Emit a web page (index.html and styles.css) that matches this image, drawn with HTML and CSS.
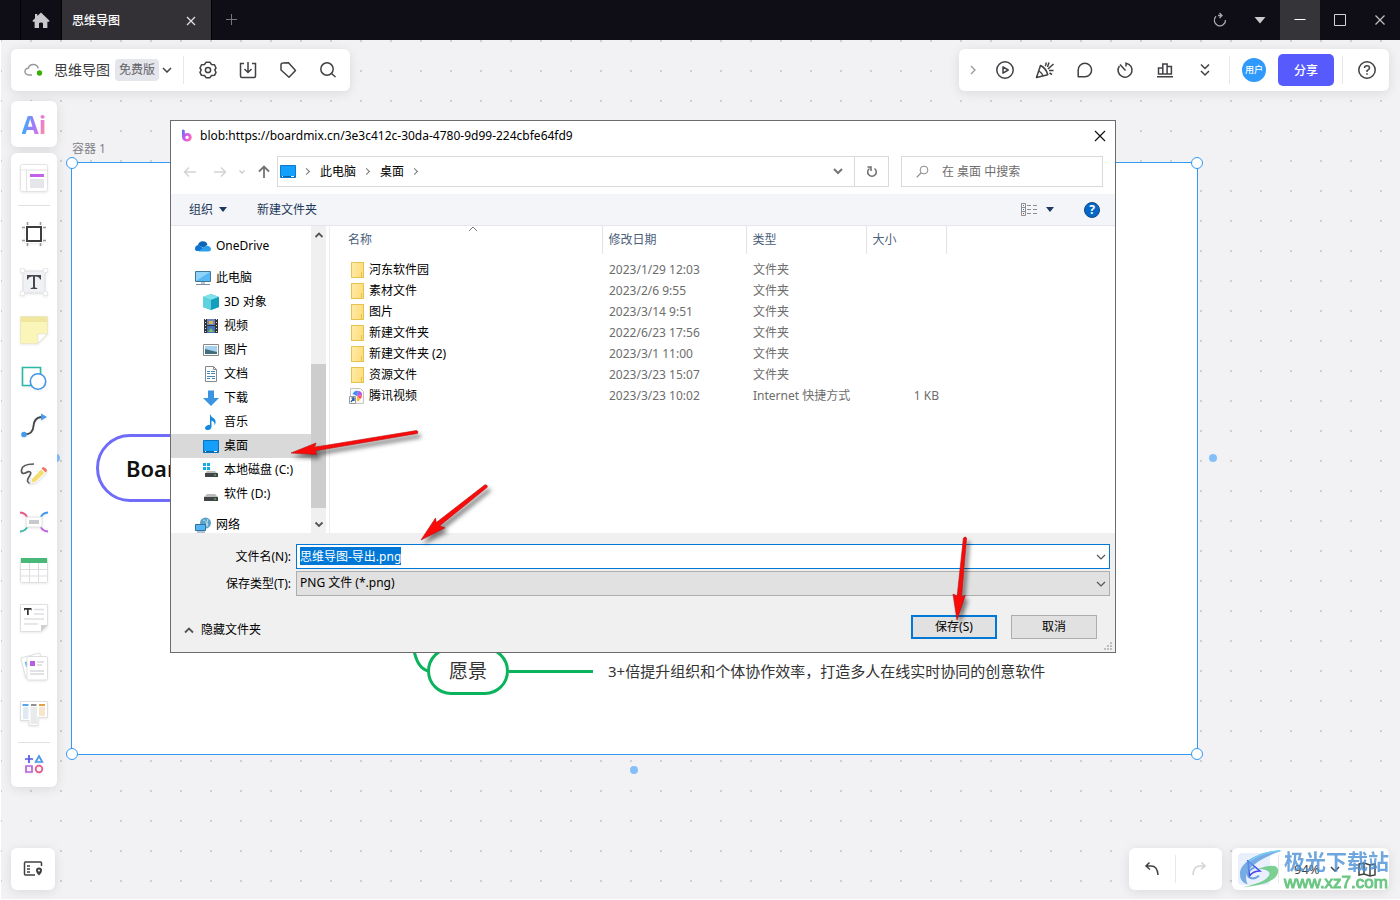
FILE: index.html
```html
<!DOCTYPE html>
<html lang="zh-CN">
<head>
<meta charset="utf-8">
<title>思维导图</title>
<link rel="stylesheet" href="styles.css">
</head>
<body>
<header class="titlebar">
  <button class="home" aria-label="主页"><svg width="18" height="17" viewBox="0 0 18 17"><path d="M9 .5 17.3 8.400v1.300H15.400V15.500Q15.400 16 14.800 16H11V11.500Q11 10.500 9 10.500T7 11.500V16H3.200Q2.600 16 2.600 15.500V9.700H.7V8.400L3 6.200V2H5.300V4z" fill="#c9c9cb"/></svg></button>
  <div class="tab"><span>思维导图</span><button aria-label="关闭标签"><svg width="10" height="10" viewBox="0 0 10 10"><path d="M1 1l8 8M9 1 1 9" stroke="#e4e4e6" stroke-width="1.200"/></svg></button></div>
  <button class="win" aria-label="新建标签"><svg width="12" height="12" viewBox="0 0 12 12"><path d="M5.500 0v11M0 5.500h11" stroke="#77767b"/></svg></button>
  <div class="winctl">
    <button class="win" aria-label="刷新"><svg width="14" height="16" viewBox="0 0 14 16" fill="none" stroke="#aaa9ae" stroke-width="1.300"><path d="M3 4.300A5.600 5.600 0 1 0 12.500 8M5 3.500h3.500M6.500 1 9 3.500 6.500 6"/></svg></button>
    <button class="win" aria-label="菜单"><svg width="12" height="8" viewBox="0 0 12 8"><path d="M.5 1h11L6 7.500z" fill="#cacacc"/></svg></button>
    <button class="win active" aria-label="最小化"><svg width="12" height="12" viewBox="0 0 12 12"><path d="M.5 5.500h11" stroke="#fff"/></svg></button>
    <button class="win" aria-label="最大化"><svg width="12" height="12" viewBox="0 0 12 12"><path d="M.5.5h11v11H.5z" fill="none" stroke="#d5d5d7"/></svg></button>
    <button class="win" aria-label="关闭"><svg width="10" height="10" viewBox="0 0 10 10"><path d="M.5.5l9 9M9.500.5l-9 9" stroke="#c2c2c5" stroke-width="1.200"/></svg></button>
  </div>
</header>

<main class="workspace">
  <section class="frame">
    <span class="frame-label">容器 1</span>
    <i class="handle tl"></i><i class="handle tr"></i><i class="handle bl"></i><i class="handle br"></i>
    <i class="port left"></i><i class="port right"></i><i class="port bottom"></i>
    <div class="root-node">Boardmix</div>
    <svg class="curve" width="20" height="30" viewBox="0 0 20 30"><path d="M1 0Q4 25 17 27" fill="none" stroke="#0bb35d" stroke-width="3"/></svg>
    <div class="branch"><span class="topic">愿景</span><span class="line"></span><span class="detail">3+倍提升组织和个体协作效率，打造多人在线实时协同的创意软件</span></div>
  </section>

  <nav class="bar file-bar">
    <svg class="cloud" width="20" height="16" viewBox="0 0 20 16"><path d="M8 13H4.500A3.400 3.400 0 0 1 4.300 6.200 5.200 5.200 0 0 1 14.300 6.400" fill="none" stroke="#9a9a9e" stroke-width="1.500"/><circle cx="15.500" cy="11" r="2.700" fill="#3bae0e"/></svg>
    <span class="doc">思维导图</span><span class="plan">免费版</span>
    <button class="small" aria-label="展开"><svg width="10" height="6" viewBox="0 0 10 6"><path d="M1 1l4 4 4-4" class="k"/></svg></button>
    <i class="sep"></i>
    <button class="ic" aria-label="设置"><svg width="18" height="18" viewBox="0 0 18 18" class="k"><path d="M7 1.300h4L12.500 3.500l3 .2L17 7 15.800 9 17 11.300l-1.500 3-3 .2L11 16.700H7L5.500 14.500l-3-.2L1 11.300 2.200 9 1 7l1.500-3.300 3-.2z" stroke-linejoin="round"/><circle cx="9" cy="9" r="2.600"/></svg></button>
    <button class="ic" aria-label="导出"><svg width="18" height="18" viewBox="0 0 18 18" class="k"><path d="M5 2.500H1.500V15q0 1.500 1.500 1.500h12q1.500 0 1.500-1.500V2.500H13M9 1v10M5.500 8 9 11.500 12.500 8"/></svg></button>
    <button class="ic" aria-label="标签"><svg width="18" height="18" viewBox="0 0 18 18" class="k"><path d="M2 4Q2 2 4 2L9.500 1.800 16.500 9.500 10 16.200 2 9z" stroke-linejoin="round"/></svg></button>
    <button class="ic" aria-label="搜索"><svg width="18" height="18" viewBox="0 0 18 18" class="k"><circle cx="8" cy="8" r="6.200"/><path d="M12.500 12.500 16.500 16"/></svg></button>
  </nav>

  <nav class="bar action-bar">
    <button class="small wide" aria-label="收起"><svg width="6" height="10" viewBox="0 0 6 10"><path d="M1 1l4 4-4 4" fill="none" stroke="#999" stroke-width="1.300"/></svg></button>
    <button class="ic" aria-label="演示"><svg width="18" height="18" viewBox="0 0 18 18" class="k"><circle cx="9" cy="9" r="8.200"/><path d="M7 5.800v6.400L12.200 9z" stroke-linejoin="round"/></svg></button>
    <button class="ic" aria-label="庆祝"><svg width="20" height="18" viewBox="0 0 20 18" class="k"><path d="M1.500 16.500 5.500 4.500Q11 7 12.800 13.800zM4 10Q7 12 8 15M10 5q1.500-1 1-3.500M14 1.500 12.500 6M13 8l5.500-5M14 9.500h4.500M14.500 12l2.500 1.500" stroke-linejoin="round"/></svg></button>
    <button class="ic" aria-label="评论"><svg width="18" height="18" viewBox="0 0 18 18" class="k"><path d="M2.200 15.700V9A6.700 6.700 0 1 1 9 15.700z" stroke-linejoin="round"/></svg></button>
    <button class="ic" aria-label="计时"><svg width="18" height="18" viewBox="0 0 18 18" class="k"><path d="M10 5.500V2.200A7 7 0 1 1 3.400 5M4 3.500 9.500 9.500"/></svg></button>
    <button class="ic" aria-label="投票"><svg width="18" height="18" viewBox="0 0 18 18" class="k"><path d="M2.500 13V7h4.300v6zM6.800 13V3h4.300v10zM11.100 13V5.500h4.300V13zM1 15.700h16"/></svg></button>
    <button class="ic" aria-label="更多"><svg width="12" height="14" viewBox="0 0 12 14" class="k"><path d="M2 1.500l4 4 4-4M2 8l4 4 4-4"/></svg></button>
    <i class="sep"></i>
    <span class="avatar">用户</span>
    <button class="share">分享</button>
    <i class="sep"></i>
    <button class="ic help" aria-label="帮助"><svg width="18" height="18" viewBox="0 0 18 18" class="k"><circle cx="9" cy="9" r="8.200"/><path d="M6.500 7Q6.500 4.800 9 4.800T11.500 7Q11.500 8.300 9 9.700V11M9 12.200v1.600"/></svg></button>
  </nav>

  <button class="bar ai-btn"><span>Ai</span></button>

  <aside class="bar tools">
    <button class="template" aria-label="模板"><svg width="28" height="28" viewBox="0 0 28 28"><rect x=".5" y=".5" width="27" height="27" rx="2" fill="#fff" stroke="#e3e3e6"/><path d="M1 6h26M6.500 6v21" stroke="#e3e3e6"/><path d="M10 10h14v3H10z" fill="#c062ea"/><path d="M10 15h14v9H10z" fill="#e5e6ea"/></svg></button>
    <i class="rule"></i>
    <button aria-label="容器"><svg width="28" height="28" viewBox="0 0 28 28" fill="none"><path d="M7.500 2v24M20.500 2v24M2 7.500h24M2 20.500h24" stroke="#99999b" stroke-width="1.500"/><path d="M5 5h18v18H5z" fill="#fff"/><path d="M7 7h14v14H7z" fill="#fff" stroke="#3d3c3f" stroke-width="2"/></svg></button>
    <button aria-label="文本"><svg width="30" height="30" viewBox="0 0 30 30"><path d="M4 4h22v22H4z" fill="#f0f1f4" stroke="#dedfe2"/><path d="M1.500 1.500h4v4h-4zM24.500 1.500h4v4h-4zM1.500 24.500h4v4h-4zM24.500 24.500h4v4h-4z" fill="#fff" stroke="#e9e9ec"/><path d="M8 8h14v4.500h-1Q20.500 9.500 16 9.500V20q0 1 2.200 1v1h-6.500v-1q2.300 0 2.300-1V9.500Q9.500 9.500 9 12.500H8z" fill="#48474b"/></svg></button>
    <button aria-label="便签"><svg width="28" height="28" viewBox="0 0 28 28"><path d="M.5.5h27V18L18 27.500H.5z" fill="#faf5b9" stroke="#ece8c3"/><path d="M1 1h26v5H1z" fill="#f0e69e"/><path d="M18 27V18h9z" fill="#fff" stroke="#ddd" stroke-width=".6"/></svg></button>
    <button aria-label="形状"><svg width="28" height="28" viewBox="0 0 28 28" fill="#fff"><path d="M2.500 3.500h18v18h-18z" stroke="#2ab8a5" stroke-width="1.600"/><circle cx="18" cy="17.500" r="7.700" stroke="#4396ec" stroke-width="1.600"/></svg></button>
    <button aria-label="连线"><svg width="28" height="28" viewBox="0 0 28 28"><path d="M5 22.500Q13 22 13.500 14T21 5" fill="none" stroke="#444" stroke-width="1.800"/><circle cx="4" cy="22.500" r="2.800" fill="#4699ef"/><path d="M21 1.500 27 5l-6 3.500z" fill="#4699ef"/></svg></button>
    <button aria-label="画笔"><svg width="30" height="26" viewBox="0 0 30 26"><path d="M15 3Q3 3 2.500 9t7 1.500q4 0 1 4.500t-1.500 6q1 2 4 1" fill="none" stroke="#555" stroke-width="1.600"/><path d="m12.500 17.500 9.500-10 4.500 4.500-10 9.500-5 1z" fill="#f3dd70" stroke="#fff" stroke-width="1.500"/><path d="m22.500 7.500 1.500-1.500q4 1 4 4l-1.500 1.500z" fill="#f27562"/><path d="m12 17-1 6 6-1L28.500 11" fill="none" stroke="#ddd" stroke-width=".8"/></svg></button>
    <button aria-label="思维导图"><svg width="30" height="24" viewBox="0 0 30 24" fill="none" stroke-width="1.800"><path d="M1 2.500Q7 3 8.500 8" stroke="#e85b91"/><path d="M29 2.500Q23 3 21.500 8" stroke="#4699ef"/><path d="M1 21.500Q7 21 8.500 16" stroke="#35b9a9"/><path d="M29 21.500Q23 21 21.500 16" stroke="#ba5bd9"/><rect x="7" y="7" width="16" height="10" rx="1" fill="#fff" stroke="#e2e2e4" stroke-width="1"/><path d="M10 10h10v4H10z" fill="#c8c9cc"/></svg></button>
    <button aria-label="表格"><svg width="28" height="26" viewBox="0 0 28 26"><rect x=".5" y="1.500" width="27" height="24" rx="1" fill="#fff" stroke="#dedfe1"/><path d="M1 1h26v5H1z" fill="#48b878"/><path d="M9.500 6v19M18.500 6v19M1 12.500h26M1 19h26" stroke="#dcdde0"/></svg></button>
    <button aria-label="文档"><svg width="28" height="28" viewBox="0 0 28 28"><path d="M.5.5h27V22l-6 5.500H.5z" fill="#fff" stroke="#dedfe1"/><path d="M21 27.500V21h6.500z" fill="#cfcfd2"/><path d="M4 4h7.500v2.500H11V5.700H8.700V11H7V5.700H4.700v.8H4z" fill="#333"/><path d="M14 5.500h10M14 10h10M4 15h20M4 20h14" stroke="#dedfe2" stroke-width="1.400"/></svg></button>
    <button aria-label="卡片"><svg width="28" height="30" viewBox="0 0 28 30"><path d="m.8 7 19-5 4 20-18 5z" fill="#fff" stroke="#dedfe1"/><path d="m5 11 4-1v5l-3 1z" fill="#4aa4f2"/><rect x="7" y="5.500" width="20.500" height="23.500" rx="1.500" fill="#fff" stroke="#dedfe1"/><path d="M10 10h5v5h-5z" fill="#b85de3"/><path d="M17 11h7M17 14h5M10 20h14M10 23h14" stroke="#c4c5c9"/></svg></button>
    <button aria-label="看板"><svg width="28" height="26" viewBox="0 0 28 26" fill="#fff"><path d="M.5.5h27v16H18v8H9v-5H.5z" stroke="#dedfe1"/><path d="M3 6h5.500v12H3z" fill="#dfeaf5"/><path d="M10.500 6H17v17h-6.500z" fill="#e9eaec"/><path d="M19 6h6v9h-6z" fill="#f9e5cd"/><path d="M2.500 3h6v2h-6z" fill="#56a5f0"/><path d="M11 3h5.500v2H11z" fill="#919296"/><path d="M19 3h6v2h-6z" fill="#e4a045"/></svg></button>
    <i class="rule"></i>
    <button class="more" aria-label="更多应用"><svg width="20" height="20" viewBox="0 0 20 20" fill="none" stroke-width="1.700"><path d="M5 1v8M1 5h8" stroke="#5757e8"/><path d="m15 2 3.300 6h-6.600z" stroke="#4899eb"/><path d="M2 12h6v6H2z" stroke="#bc63dc"/><circle cx="15" cy="15" r="3.300" stroke="#e8598b"/></svg></button>
  </aside>

  <button class="bar locate" aria-label="定位"><svg width="20" height="18" viewBox="0 0 20 18"><path d="M12 15H2.500q-1 0-1-1V3q0-1 1-1h15q1 0 1 1v3" class="k"/><path d="M4 6h3M4 9h3M4 12h3" stroke="#414044" stroke-width="1.500"/><path fill-rule="evenodd" d="M16 7.500a3 3 0 0 1 3 3c0 2-2 4-3 5-1-1-3-3-3-5a3 3 0 0 1 3-3m0 2a1 1 0 1 0 0 2 1 1 0 0 0 0-2" fill="#414044"/></svg></button>

  <div class="dock">
    <div class="bar history"><button aria-label="撤销"><svg width="16" height="16" viewBox="0 0 16 16" class="k"><path d="M5.500 1.500 2 5l4 3.500M2.500 5H7q6.500 0 7 9"/></svg></button><i class="sep"></i><button aria-label="重做"><svg width="16" height="16" viewBox="0 0 16 16" fill="none" stroke="#d4d4d7" stroke-width="1.500"><path d="M10.500 1.500 14 5l-4 3.500M13.500 5H9q-6.500 0-7 9"/></svg></button></div>
    <div class="bar zoom"><button class="pointer" aria-label="选择"><svg width="16" height="18" viewBox="0 0 16 18"><path d="M2 1 14 11Q7 11 3.500 16z" fill="none" stroke="#4546ee" stroke-width="1.600"/></svg></button><i class="sep"></i><span>94%</span><svg width="10" height="6" viewBox="0 0 10 6"><path d="M1 1l4 4 4-4" class="k"/></svg><button class="map" aria-label="地图"><svg width="20" height="16" viewBox="0 0 20 16" class="k"><path d="M2 3 7 2l6 2 5-1v11l-5 1-6-2-5 1zM7 2v11M13 4v11"/></svg></button></div>
    <div class="watermark">
      <svg width="46" height="42" viewBox="0 0 48 42"><path d="M46 1C25 0 2 12 2 25q0 9 8 11Q5 25 16 16T46 1" fill="#5b9be0"/><path d="M12 12Q25 2 44 1" stroke="#58c4f1" stroke-width="1.500" fill="none"/><path d="M20 20q22-8 22 2Q41 36 4 39q27-5 29-14 0-5-13-5" fill="#5cc579"/><path d="M18 18q-10 4-7 10 5 4 11-1" stroke="#4b8fd9" stroke-width="2" fill="none"/></svg>
      <div><b>极光下载站</b><em>www.xz7.com</em></div>
    </div>
  </div>

  <form class="dialog" role="dialog" aria-label="另存为">
    <div class="d-title"><svg width="12" height="14" viewBox="0 0 12 14"><defs><linearGradient id="bm" x2="1" y2=".6"><stop stop-color="#3d7cf5"/><stop offset=".45" stop-color="#c05cf0"/><stop offset="1" stop-color="#ff67b7"/></linearGradient></defs><path d="M1 1Q2.500 0 3.800 1.500v3Q5 4 6.500 4a4 4 0 0 1 0 8.500Q1 12.500 1 7.500zM6 6.700a1.700 1.700 0 1 0 .1 0" fill="url(#bm)" fill-rule="evenodd"/></svg><span>blob:https://boardmix.cn/3e3c412c-30da-4780-9d99-224cbfe64fd9</span><button type="button" aria-label="关闭"><svg width="12" height="12" viewBox="0 0 12 12"><path d="M1 1l10 10M11 1 1 11" stroke="#111" stroke-width="1.200"/></svg></button></div>
    <div class="d-nav">
      <button type="button" aria-label="后退"><svg width="14" height="12" viewBox="0 0 14 12"><path d="M13 6H1.500M6 1.500 1.500 6 6 10.500" fill="none" stroke="#d4d4d4" stroke-width="1.500"/></svg></button>
      <button type="button" aria-label="前进"><svg width="14" height="12" viewBox="0 0 14 12"><path d="M1 6h11.500M8 1.500 12.500 6 8 10.500" fill="none" stroke="#d4d4d4" stroke-width="1.500"/></svg></button>
      <button type="button" class="tiny" aria-label="历史"><svg width="6" height="4" viewBox="0 0 6 4"><path d="m.5.5 2.500 2.500L5.500.5" fill="none" stroke="#ccc" stroke-width="1.300"/></svg></button>
      <button type="button" class="up" aria-label="上移"><svg width="12" height="13" viewBox="0 0 12 13"><path d="M6 13V2M1 6.500 6 1.500l5 5" fill="none" stroke="#737373" stroke-width="1.800"/></svg></button>
      <div class="address"><svg width="16" height="13" viewBox="0 0 16 13"><path d="M.5.5h15v12H.5z" fill="#13a0fb" stroke="#087bd0"/><path d="M1 11.500h14" stroke="#0868ad"/><path d="M2 11.500h1M11 11.500h3" stroke="#fff"/></svg><i class="crumb"></i><span>此电脑</span><i class="crumb"></i><span>桌面</span><i class="crumb"></i><svg class="drop" width="10" height="7" viewBox="0 0 10 7"><path d="m1 1 4 4 4-4" fill="none" stroke="#777" stroke-width="2"/></svg><button type="button" class="refresh" aria-label="刷新"><svg width="12" height="13" viewBox="0 0 12 13"><path d="M8.500 3.500A4.300 4.300 0 1 1 3.500 3.500M1.500 2H5v4" fill="none" stroke="#6c6c6c" stroke-width="1.500"/></svg></button></div>
      <label class="search"><svg width="13" height="13" viewBox="0 0 13 13"><circle cx="8" cy="5" r="3.900" fill="none" stroke="#8b8b8b"/><path d="M5 8 .7 12.300" stroke="#8b8b8b" stroke-width="1.200"/></svg><input type="text" placeholder="在 桌面 中搜索" aria-label="搜索"></label>
    </div>
    <div class="d-tools"><button type="button">组织<i class="tri"></i></button><button type="button">新建文件夹</button><button type="button" class="view" aria-label="视图"><svg width="17" height="13" viewBox="0 0 17 13" fill="none"><path d="M.5.5h4v12h-4zM.5 4.500h4M.5 8.500h4M6 2.500h4M12 2.500h4M6 6.500h4M12 6.500h4M6 10.500h4M12 10.500h4" stroke="#8d8d8f"/><path d="M2 2.500h1M2 6.500h1" stroke="#3d75b5"/><path d="M2 10.500h1" stroke="#b33"/></svg><i class="tri"></i></button><button type="button" class="qm" aria-label="帮助">?</button></div>
    <div class="d-body">
      <ul class="tree">
        <li class="gap"><svg width="16" height="16" viewBox="0 0 16 16"><path d="M3 7a5 5 0 0 1 9.500-.5L9 10z" fill="#0a64b8"/><path d="M0 11q0-4 4-4l8 6H3q-3 0-3-2" fill="#0d75d1"/><path d="M4 13 10 8q5-1 6 3 0 2.500-3 2.500H4z" fill="#2b9fea"/></svg>OneDrive</li>
        <li><svg width="16" height="16" viewBox="0 0 16 16"><path d="M.5 1.500h15v10H.5z" fill="#58b7f4" stroke="#3f7896"/><path d="M1 2h14L1 11z" fill="#8fd3fa"/><path d="M6 13h4M1 14.500h14" stroke="#76909e"/></svg>此电脑</li>
        <li class="sub"><svg width="16" height="16" viewBox="0 0 16 16"><path d="m0 3 8-3 8 3v10l-8 3-8-3z" fill="#2cb8cf"/><path d="m0 3 8-3 8 3-8 3z" fill="#82e1e8"/><path d="m0 3 8 3v10l-8-3z" fill="#5fd2df"/><path d="m8 6 8-3v10l-8 3z" fill="#139fbb"/></svg>3D 对象</li>
        <li class="sub"><svg width="16" height="16" viewBox="0 0 16 16"><path d="M1 1h14v14H1z" fill="#333"/><path d="M4 1h8v6H4z" fill="#6c84c2"/><path d="M4 8h8v7H4z" fill="#3e73bd"/><path d="M6 3h4v3H6z" fill="#ddb44b"/><path d="m5 14 3-4 3 4z" fill="#83bd61"/><path d="M2.500 1v14M13.500 1v14" stroke="#ddd" stroke-dasharray="1 2"/></svg>视频</li>
        <li class="sub"><svg width="16" height="16" viewBox="0 0 16 16"><path d="M.5 2.500h15v11H.5z" fill="#fff" stroke="#888"/><path d="M2 4h12v8H2z" fill="#a4d3ef"/><path d="m2 7 12 3v2H2z" fill="#416d7c"/></svg>图片</li>
        <li class="sub"><svg width="16" height="16" viewBox="0 0 16 16"><path d="M2.500.5h8l3 3v12h-11z" fill="#fff" stroke="#888"/><path d="M4 5.500h3M8 5.500h4M4 7.500h3M8 7.500h4M4 10.500h8M4 12.500h3M9 12.500h3" stroke="#4788b5"/><path d="M10.500.5v3h3" fill="none" stroke="#888"/></svg>文档</li>
        <li class="sub"><svg width="16" height="16" viewBox="0 0 16 16"><path d="M5 .5h6V8h5l-8 8-8-8h5z" fill="#3b94df"/></svg>下载</li>
        <li class="sub"><svg width="16" height="16" viewBox="0 0 16 16"><path d="M7 0q1 3 4 4.500 3 3 .5 7 .5-4-3-5V13q-.5 3-3.500 3-3 0-3-2t3-3l2-.3z" fill="#1588df"/></svg>音乐</li>
        <li class="sub selected"><svg width="16" height="16" viewBox="0 0 16 16"><path d="M.5 2.500h15v12H.5z" fill="#149ffb" stroke="#0872ba"/><path d="M1 13.500h14" stroke="#0868ad"/><path d="M2 13.500h1M11 13.500h3" stroke="#fff"/></svg>桌面</li>
        <li class="sub"><svg width="16" height="16" viewBox="0 0 16 16"><path d="M0 1h3v3H0zM4 1h3v3H4zM0 5h3v3H0zM4 5h3v3H4z" fill="#0daceb"/><path d="M4 9h8l3 3H2z" fill="#bbb"/><path d="M2 11h13v4H2z" fill="#424547"/><path d="M11 13h2" stroke="#5be04f"/></svg>本地磁盘 (C:)</li>
        <li class="sub gap"><svg width="16" height="16" viewBox="0 0 16 16"><path d="M4 8h8l3 3H1z" fill="#bbb"/><path d="M1 11h14v4H1z" fill="#424547"/><path d="M11 13h2" stroke="#5be04f"/></svg>软件 (D:)</li>
        <li class="last"><svg width="16" height="16" viewBox="0 0 16 16"><circle cx="10.500" cy="6" r="5.500" fill="#5aa3c9"/><path d="M8 3q4 0 4 7M13 2q-2 4 0 7" stroke="#bfe0ef" fill="none"/><path d="M.5 7.500h10v6H.5z" fill="#53b5f3" stroke="#34719b"/><path d="M2 15h8" stroke="#5d8ba9"/></svg>网络</li>
      </ul>
      <div class="scroll"><svg width="10" height="17" viewBox="0 0 10 17"><path d="m1.500 11 3.500-3.500L8.500 11" fill="none" stroke="#555" stroke-width="1.800"/></svg><i class="before"></i><i class="thumb"></i><i class="after"></i><svg width="10" height="17" viewBox="0 0 10 17"><path d="m1.500 6.500 3.500 3.500 3.500-3.500" fill="none" stroke="#555" stroke-width="1.800"/></svg></div>
      <div class="files">
        <svg class="sort" width="10" height="6" viewBox="0 0 10 6"><path d="m1 5 4-4 4 4" fill="none" stroke="#777"/></svg>
        <table>
          <colgroup><col class="c1"><col class="c2"><col class="c3"><col class="c4"><col></colgroup>
          <thead><tr><th>名称</th><th>修改日期</th><th>类型</th><th>大小</th><th class="rest"></th></tr></thead>
          <tbody>
            <tr><td><i class="folder"></i>河东软件园</td><td>2023/1/29 12:03</td><td>文件夹</td><td></td><td></td></tr>
            <tr><td><i class="folder"></i>素材文件</td><td>2023/2/6 9:55</td><td>文件夹</td><td></td><td></td></tr>
            <tr><td><i class="folder"></i>图片</td><td>2023/3/14 9:51</td><td>文件夹</td><td></td><td></td></tr>
            <tr><td><i class="folder"></i>新建文件夹</td><td>2022/6/23 17:56</td><td>文件夹</td><td></td><td></td></tr>
            <tr><td><i class="folder"></i>新建文件夹 (2)</td><td>2023/3/1 11:00</td><td>文件夹</td><td></td><td></td></tr>
            <tr><td><i class="folder"></i>资源文件</td><td>2023/3/23 15:07</td><td>文件夹</td><td></td><td></td></tr>
            <tr><td><svg class="lnk" width="16" height="16" viewBox="0 0 16 16"><path d="M1.500.5h10l3 3v12h-13z" fill="#f8f8f8" stroke="#c5c5c5"/><path d="M8 8 3.500 6Q6 1.500 9 3z" fill="#3d8df5"/><path d="m8 8 1-5q4 0 4 4z" fill="#b15af0"/><path d="m8 8 5-1q0 3-2 4z" fill="#ff4e6b"/><path d="m8 8 3 3q-1 3-3 2z" fill="#ffb52b"/><path d="M.5 8.500h6v7h-6z" fill="#fff" stroke="#999"/><path d="m2 14 3-4M2.500 10H5v3" stroke="#235da8" stroke-width="1.300" fill="none"/></svg>腾讯视频</td><td>2023/3/23 10:02</td><td>Internet 快捷方式</td><td>1 KB</td><td></td></tr>
          </tbody>
        </table>
      </div>
    </div>
    <div class="d-foot">
      <div class="fields">
        <label for="fname">文件名(N):</label>
        <div class="combo"><input id="fname" type="text" value="思维导图-导出.png" spellcheck="false" autofocus><svg width="10" height="6" viewBox="0 0 10 6"><path d="m1 1 4 4 4-4" fill="none" stroke="#555" stroke-width="1.200"/></svg></div>
        <label for="ftype">保存类型(T):</label>
        <div class="combo"><select id="ftype"><option>PNG 文件 (*.png)</option></select><svg width="10" height="6" viewBox="0 0 10 6"><path d="m1 1 4 4 4-4" fill="none" stroke="#555" stroke-width="1.200"/></svg></div>
      </div>
      <div class="d-actions"><button type="button" class="hide"><svg width="10" height="7" viewBox="0 0 10 7"><path d="m1 5.500 4-4 4 4" fill="none" stroke="#555" stroke-width="1.800"/></svg>隐藏文件夹</button><button type="button" class="push primary">保存(S)</button><button type="button" class="push">取消</button></div>
      <svg class="grip" width="8" height="8" viewBox="0 0 8 8"><path d="M6 0h2v2H6zM3 3h2v2H3zM6 3h2v2H6zM0 6h2v2H0zM3 6h2v2H3zM6 6h2v2H6z" fill="#bfbfbf"/></svg>
    </div>
  </form>

  <svg class="arrows" width="700" height="210" viewBox="290 420 700 210">
    <g fill="#fb0a0a" stroke="#b50d0d" stroke-width=".6" stroke-linejoin="round">
      <path d="m291 453 25-10-1.500 4.200L416.500 430.500q2.500 1 .8 3L315.500 450.800l1 3.700z"/>
      <path d="m421 540 14.500-22 .8 4.500L485 484.700q3 0 2.200 2.600L439.500 526l5.500 1.800z"/>
      <path d="m957 620-4-26 4.200 2 6.200-58q2-2 3.200 0L961.500 597l3.700-1.500z"/>
    </g>
  </svg>
</main>
<script src="dialog.js"></script>
</body>
</html>
```

FILE: styles.css
```css
* { box-sizing: border-box; }
body {
  margin: 0; height: 100vh; display: flex; flex-direction: column; overflow: hidden;
  font: 12px/18px "Noto Sans", "Noto Sans CJK SC", sans-serif; color: #3c3c40;
}
button { border: 0; padding: 0; background: none; font: inherit; color: inherit; display: flex; align-items: center; justify-content: center; }
input, select { font: inherit; color: inherit; }
svg { display: block; flex: none; }
.k { fill: none; stroke: #414044; stroke-width: 1.5; }

.titlebar { display: flex; height: 40px; flex: none; background: #0f0d15; padding-left: 20px; }
.home { width: 42px; border-left: 1px solid #020204; border-right: 1px solid #020204; }
.tab { width: 150px; display: flex; align-items: center; justify-content: space-between; padding: 1px 15px 0 10px; background: #333136; color: #fff; border-right: 1px solid #020204; font-weight: 500; }
.win { width: 40px; height: 40px; }
.win.active { background: #353438; }
.winctl { display: flex; margin-left: auto; }

.workspace {
  position: relative; flex: 1; border-left: 1px solid #fff; border-bottom: 1px solid #fff;
  background: conic-gradient(from 270deg at 2px 2px, #cfcfd2 90deg, #f2f2f5 0) 29px 0 / 30px 30px;
}
.frame { position: absolute; left: 70px; top: 122px; right: 202px; height: 593px; background: #fff; border: 1px solid #3399f3; }
.frame-label { position: absolute; left: 0; top: -23px; color: #828286; }
.handle { position: absolute; width: 12px; height: 12px; border-radius: 50%; background: #fff; border: 1px solid #3399f3; }
.tl, .bl { left: -6px; }
.tr, .br { right: -6px; }
.tl, .tr { top: -6px; }
.bl, .br { bottom: -6px; }
.port { position: absolute; width: 8px; height: 8px; border-radius: 50%; background: #84c0f7; }
.port.left { left: -20px; top: 291px; }
.port.right { right: -20px; top: 291px; }
.port.bottom { left: 558px; bottom: -20px; }
.root-node { position: absolute; left: 24px; top: 271px; padding: 0 27px; line-height: 62px; border: 3px solid #6e6cf8; border-radius: 34px; background: #fff; font-size: 22px; font-weight: 600; color: #111; }
.curve { position: absolute; left: 340px; top: 481px; }
.branch { position: absolute; left: 355px; top: 484px; display: flex; align-items: center; white-space: nowrap; }
.topic { padding: 0 19px; line-height: 42px; border: 3px solid #0bb35d; border-radius: 24px; font-size: 19px; color: #333; }
.line { width: 84px; height: 3px; background: #0bb35d; }
.detail { margin-left: 15px; font-size: 15px; color: #333; }

.bar { background: #fff; border-radius: 6px; box-shadow: 0 2px 12px rgba(0, 0, 0, .1); display: flex; align-items: center; }
.file-bar, .action-bar { position: absolute; top: 9px; height: 42px; }
.file-bar { left: 10px; padding: 0 2px 0 13px; }
.action-bar { right: 11px; }
.cloud { margin-right: 10px; }
.doc { font-size: 14px; }
.plan { margin-left: 5px; padding: 2px 4px; background: #e5e6eb; border-radius: 4px; color: #626267; }
.small { width: 16px; height: 30px; }
.wide { width: 26px; padding-left: 2px; }
.sep { width: 1px; height: 28px; background: #e8e8ea; }
.file-bar .sep { margin: 0 4px 0 8px; }
.action-bar .sep { margin-left: 4px; }
.ic { width: 40px; height: 40px; }
.avatar { width: 24px; margin: 0 12px; border-radius: 50%; background: #2f9afc; color: #fff; font-size: 9px; line-height: 24px; text-align: center; font-weight: 500; }
.share { width: 56px; height: 32px; margin-right: 4px; padding-top: 2px; border-radius: 5px; background: #575bfd; color: #fff; font-weight: 500; }
.help { margin: 0 2px 0 4px; }
.ai-btn { position: absolute; left: 10px; top: 61px; width: 46px; height: 46px; }
.ai-btn span { background: linear-gradient(100deg, #35b2fa 10%, #a178fb 50%, #e67cd5 75%, #ff9d7e); background-clip: text; color: transparent; font: 700 25px/30px "Open Sans", sans-serif; }
.tools { position: absolute; left: 10px; top: 113px; width: 46px; flex-direction: column; }
.tools button { width: 46px; height: 48px; }
.tools svg { filter: drop-shadow(0 1px 1px rgba(0, 0, 0, .08)); }
.tools .template { height: 52px; padding-bottom: 3px; }
.tools .more { height: 44px; padding-bottom: 3px; }
.rule { width: 32px; height: 1px; margin: 0 0 4px; background: #e0e0e3; }
.rule:last-of-type { margin: 4px 0 0; }
.locate { position: absolute; left: 10px; bottom: 9px; width: 44px; height: 42px; }
.dock { position: absolute; right: 11px; bottom: 9px; display: flex; gap: 10px; }
.dock .bar { height: 42px; }
.history button { width: 46px; height: 42px; }
.zoom { width: 157px; padding: 0 6px; font-size: 13px; }
.pointer { width: 32px; height: 32px; border-radius: 4px; background: #e9effd; }
.zoom .sep { margin: 0 15px 0 8px; }
.zoom svg { margin-left: 10px; }
.zoom button svg { margin: 0; }
.zoom .map { margin-left: auto; padding-right: 6px; }
.watermark { position: absolute; right: 0; bottom: -2px; display: flex; opacity: .8; white-space: nowrap; pointer-events: none; }
.watermark b, .watermark em { display: block; }
.watermark b { font-size: 21px; line-height: 24px; color: #4b91d5; font-weight: 700; }
.watermark em { font: 17px/19px "Liberation Sans", sans-serif; color: #45b965; -webkit-text-stroke: 1px #45b965; }

.dialog { position: absolute; left: 169px; top: 80px; right: 284px; border: 1px solid #6c6c6f; background: #fff; color: #000; }
.d-title { display: flex; align-items: center; height: 29px; padding: 0 9px 0 10px; }
.d-title span { margin-left: 7px; }
.d-title button { margin-left: auto; }
.d-nav { display: flex; align-items: center; padding: 6px 12px 7px; }
.d-nav > button { width: 14px; height: 30px; margin-right: 16px; }
.d-nav > .tiny { width: 6px; margin: 0 12px 0 -4px; }
.d-nav > .up { margin: 0 6px 0 0; }
.address { flex: 1; display: flex; align-items: center; height: 31px; padding-left: 2px; border: 1px solid #d9d9d9; }
.crumb { width: 5px; height: 5px; margin: 0 11px 0 8px; border: solid #777; border-width: 1px 1px 0 0; transform: rotate(45deg); }
.drop { margin-left: auto; }
.refresh { width: 34px; height: 29px; margin-left: 11px; border-left: 1px solid #d9d9d9; }
.search { display: flex; align-items: center; gap: 13px; width: 202px; height: 31px; margin-left: 12px; padding-left: 14px; border: 1px solid #d9d9d9; }
.search input { width: 150px; border: 0; padding: 0; outline: 0; }
.search input::placeholder { color: #6d6d6d; opacity: 1; }
.d-tools { display: flex; align-items: center; height: 32px; padding: 0 15px 0 18px; background: #f4f5f8; border-bottom: 1px solid #e6e7ea; color: #1e395b; }
.d-tools button { margin-right: 30px; }
.tri { margin-left: 6px; border: 4px solid transparent; border-top: 5px solid #1e395b; border-bottom: 0; }
.d-tools .view { margin: 0 30px 0 auto; }
.view .tri { margin-left: 8px; }
.d-tools .qm { width: 16px; height: 16px; margin: 0; border-radius: 50%; background: #0667c8; border: 1px solid #104a83; color: #fff; font-weight: 700; }
.d-body { display: flex; }
.tree { list-style: none; margin: 0; padding: 8px 0 0; width: 140px; }
.tree li { display: flex; align-items: center; gap: 5px; height: 24px; padding-left: 24px; white-space: nowrap; }
.tree .sub { padding-left: 32px; }
.tree .gap { margin-bottom: 8px; }
.tree .selected { background: #d9d9d9; }
.tree .last { height: 19px; padding-top: 3px; }
.scroll { width: 15px; display: flex; flex-direction: column; align-items: center; background: #f0f0f0; }
.before { flex: 121; }
.thumb { flex: 144; width: 100%; background: #cdcdcd; }
.after { flex: 8; }
.files { position: relative; flex: 1; margin-left: 3px; border-left: 1px solid #ededed; }
.sort { position: absolute; left: 138px; top: 0; }
table { width: 100%; border-collapse: collapse; table-layout: fixed; }
.c1 { width: 272px; }
.c2 { width: 144px; }
.c3 { width: 120px; }
.c4 { width: 80px; }
th { height: 28px; padding: 0 6px; border-right: 1px solid #e2e2e2; text-align: left; font-weight: 400; color: #4b607b; }
th:first-child { padding-left: 18px; }
th.rest { border: 0; }
td { height: 21px; padding: 0 7px; line-height: 18px; color: #6d6d6d; white-space: nowrap; }
td:first-child { padding-left: 21px; color: #000; }
td:nth-child(4) { text-align: right; }
tbody::before { content: ""; display: block; height: 5px; }
.folder { display: inline-block; width: 13px; height: 16px; margin-right: 5px; vertical-align: middle; border: 1px solid #e6c351; background: linear-gradient(#e6c351, #e6c351) 9px 9px / 1px 6px no-repeat, linear-gradient(100deg, #ffeaa5, #ffdc79); }
.lnk { display: inline-block; margin: 0 4px 0 -2px; vertical-align: middle; }
.d-foot { position: relative; padding: 11px 5px 13px; background: #f0f0f0; }
.fields { display: grid; grid-template-columns: 115px 1fr; gap: 2px 5px; align-items: center; }
.fields label { text-align: right; }
.combo { position: relative; }
.combo input, .combo select { display: block; width: 100%; height: 25px; padding: 0 3px 1px; border: 1px solid #0078d7; border-radius: 0; outline: 0; background: #fff; appearance: none; }
.combo select { border-color: #adadad; background: #e1e1e1; }
.combo svg { position: absolute; right: 4px; top: 10px; pointer-events: none; }
.combo input::selection { background: #0078d7; color: #fff; }
.d-actions { display: flex; align-items: center; margin-top: 19px; padding: 0 13px 0 8px; }
.hide { gap: 7px; height: 24px; margin-right: auto; padding-top: 6px; }
.push { width: 86px; height: 24px; margin-left: 14px; border: 1px solid #adadad; background: #e1e1e1; }
.push.primary { border: 2px solid #0078d7; }
.grip { position: absolute; right: 3px; bottom: 2px; }
.arrows { position: absolute; left: 289px; top: 380px; pointer-events: none; filter: drop-shadow(3px 4px 2px rgba(0, 0, 0, .5)); }
```

FILE: dialog.js
```js
const nameField = document.getElementById("fname");
nameField.focus();
nameField.select();
```
